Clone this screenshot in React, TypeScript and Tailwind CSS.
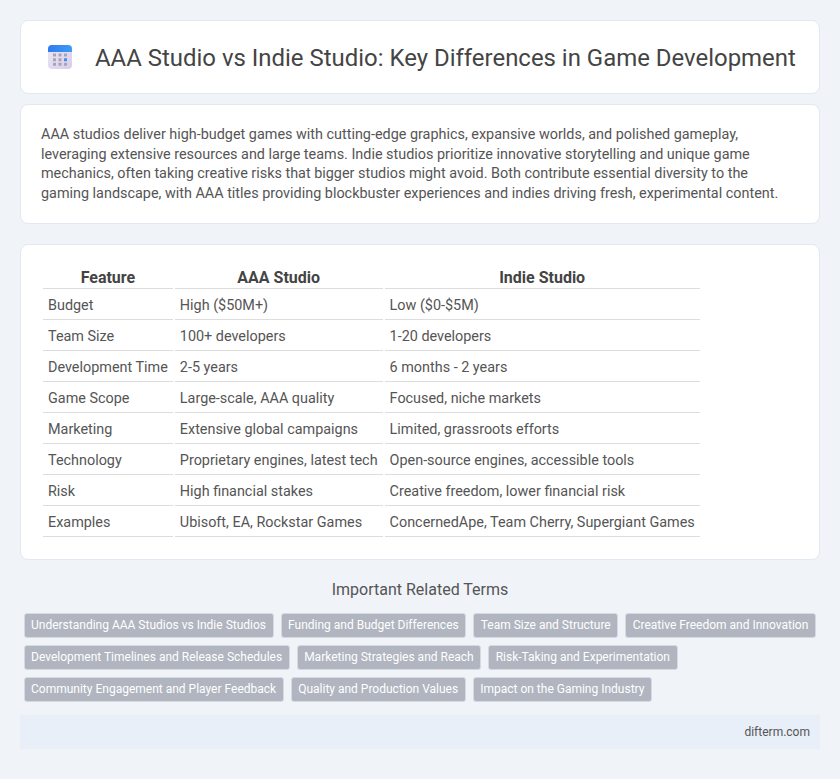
const ROWS = [
  ["Budget", "High ($50M+)", "Low ($0-$5M)"],
  ["Team Size", "100+ developers", "1-20 developers"],
  ["Development Time", "2-5 years", "6 months - 2 years"],
  ["Game Scope", "Large-scale, AAA quality", "Focused, niche markets"],
  ["Marketing", "Extensive global campaigns", "Limited, grassroots efforts"],
  ["Technology", "Proprietary engines, latest tech", "Open-source engines, accessible tools"],
  ["Risk", "High financial stakes", "Creative freedom, lower financial risk"],
  ["Examples", "Ubisoft, EA, Rockstar Games", "ConcernedApe, Team Cherry, Supergiant Games"],
];

const TERMS = [
  "Understanding AAA Studios vs Indie Studios",
  "Funding and Budget Differences",
  "Team Size and Structure",
  "Creative Freedom and Innovation",
  "Development Timelines and Release Schedules",
  "Marketing Strategies and Reach",
  "Risk-Taking and Experimentation",
  "Community Engagement and Player Feedback",
  "Quality and Production Values",
  "Impact on the Gaming Industry",
];

function CalendarIcon() {
  const dots = [];
  for (let r = 0; r < 3; r++) {
    for (let c = 0; c < 3; c++) {
      dots.push(
        <rect
          key={`${r}-${c}`}
          x={5 + c * 5.5}
          y={8.5 + r * 4.65}
          width="3"
          height="3"
          rx="0.4"
          fill={r === 1 && c === 2 ? "#3b8ff0" : "#a9a3b8"}
        />
      );
    }
  }
  return (
    <svg width="24" height="24" viewBox="0 0 24 24" className="shrink-0">
      <defs>
        <linearGradient id="cal-body" x1="0" y1="0" x2="1" y2="1">
          <stop offset="0" stopColor="#ece8f4" />
          <stop offset="1" stopColor="#d9cdea" />
        </linearGradient>
        <linearGradient id="cal-top" x1="0" y1="0" x2="1" y2="0">
          <stop offset="0" stopColor="#2f7bf0" />
          <stop offset="1" stopColor="#3f9bf5" />
        </linearGradient>
      </defs>
      <rect x="0" y="0" width="24" height="24" rx="4" fill="url(#cal-body)" />
      <path d="M0 7V4a4 4 0 0 1 4-4h16a4 4 0 0 1 4 4v3z" fill="url(#cal-top)" />
      {dots}
    </svg>
  );
}

export default function App() {
  return (
    <div className="min-h-[779px] bg-[#f0f4f9] px-5 pt-5 font-['Roboto',sans-serif] text-[#444]">
      <div className="flex items-center gap-[23px] rounded-lg border border-[#e2e8f0] bg-white pl-[27px] pr-5 py-[23px]">
        <CalendarIcon />
        <h1 className="pt-[2px] text-[23.94px] font-normal leading-[24px] text-[#444] whitespace-nowrap">
          AAA Studio vs Indie Studio: Key Differences in Game Development
        </h1>
      </div>

      <div className="mt-[10px] rounded-lg border border-[#e2e8f0] bg-white p-5">
        <p className="text-[14.4px] leading-[19.5px] text-[#555]">
          AAA studios deliver high-budget games with cutting-edge graphics, expansive worlds, and polished gameplay, leveraging extensive resources and large teams. Indie studios prioritize innovative storytelling and unique game mechanics, often taking creative risks that bigger studios might avoid. Both contribute essential diversity to the gaming landscape, with AAA titles providing blockbuster experiences and indies driving fresh, experimental content.
        </p>
      </div>

      <div className="mt-5 rounded-lg border border-[#e2e8f0] bg-white p-5">
        <table className="border-separate border-spacing-[2px] text-[14.4px] text-[#555]">
          <thead>
            <tr>
              <th className="border-b border-[#ddd] pt-[1px] text-center text-[16px] font-bold leading-[20px] text-[#444]">Feature</th>
              <th className="border-b border-[#ddd] pt-[1px] text-center text-[16px] font-bold leading-[20px] text-[#444]">AAA Studio</th>
              <th className="border-b border-[#ddd] pt-[1px] text-center text-[16px] font-bold leading-[20px] text-[#444]">Indie Studio</th>
            </tr>
          </thead>
          <tbody>
            {ROWS.map((row) => (
              <tr key={row[0]}>
                {row.map((cell) => (
                  <td key={cell} className="border-b border-[#ddd] px-[5px] pt-[5px] pb-[3px] leading-[20px] whitespace-nowrap">
                    {cell}
                  </td>
                ))}
              </tr>
            ))}
          </tbody>
        </table>
      </div>

      <div className="mt-[19px] text-center text-[16px] leading-[22px] text-[#555]">Important Related Terms</div>

      <div className="mt-[12px] flex flex-wrap gap-x-[7px] gap-y-[7px] pl-[3.5px]">
        {TERMS.map((t) => (
          <span key={t} className="rounded-[3px] border border-[#d5d9e0] bg-[#b0b5bf] px-[6.5px] py-[3px] text-[12px] leading-[17px] text-white">
            {t}
          </span>
        ))}
      </div>

      <div className="mt-[13px] bg-[#e8eff8] px-[10px] py-2 text-right text-[12px] leading-[18px] text-[#555]">
        difterm.com
      </div>
    </div>
  );
}
